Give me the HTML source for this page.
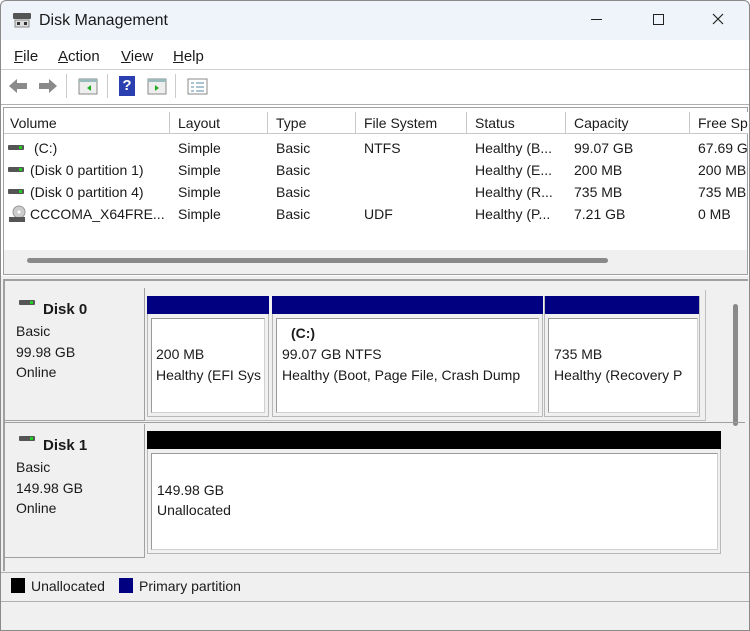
<!DOCTYPE html>
<html><head><meta charset="utf-8"><style>
*{margin:0;padding:0;box-sizing:border-box}
body{width:750px;height:631px;overflow:hidden;background:#fff;font-family:"Liberation Sans",sans-serif;font-size:14px;color:#1a1a1a;position:relative}
.a{position:absolute;white-space:nowrap}
.hdr{position:absolute;top:112px;height:22px;border-right:1px solid #c8c8c8;border-bottom:1px solid #c8c8c8;padding:3px 0 0 6px;background:#fff;white-space:nowrap;overflow:hidden}
.row{position:absolute;left:0;width:748px;height:22px}
.dk{position:absolute;width:16px;height:5px;background:#555;border-radius:1px}
.dk:after{content:"";position:absolute;right:2px;top:1px;width:3px;height:3px;background:#2c2}
.box{position:absolute;background:#fff;border:1px solid #9a9a9a;border-right-color:#d0d0d0;border-bottom-color:#d0d0d0}
.lbl{position:absolute;background:#f0f0f0;border-right:1px solid #a0a0a0;border-bottom:1px solid #a0a0a0}
</style></head><body>
<div class="a" style="left:0;top:0;width:750px;height:40px;background:#eef4f9;border-radius:6px 6px 0 0"></div>
<div class="a" style="left:0;top:0;width:750px;height:631px;border:1px solid #8a8a8a;border-radius:6px 6px 0 0"></div>
<svg class="a" style="left:12px;top:12px" width="20" height="16"><rect x="1" y="1" width="18" height="6" fill="#555" rx="1"/><rect x="3" y="8" width="14" height="7" fill="#ddd" stroke="#888"/><rect x="5" y="10" width="3" height="3" fill="#333"/><rect x="12" y="10" width="3" height="3" fill="#333"/></svg>
<div class="a" style="left:39px;top:12px;font-size:16px">Disk Management</div>
<div class="a" style="left:591px;top:19px;width:11px;height:1px;background:#222"></div>
<div class="a" style="left:653px;top:14px;width:11px;height:11px;border:1px solid #222"></div>
<svg class="a" style="left:712px;top:13px" width="12" height="12"><path d="M1 1L11 11M11 1L1 11" stroke="#222" stroke-width="1.2"/></svg>
<div class="a" style="left:14px;top:48px;font-size:15px"><u>F</u>ile</div>
<div class="a" style="left:58px;top:48px;font-size:15px"><u>A</u>ction</div>
<div class="a" style="left:121px;top:48px;font-size:15px"><u>V</u>iew</div>
<div class="a" style="left:173px;top:48px;font-size:15px"><u>H</u>elp</div>
<div class="a" style="left:1px;top:69px;width:748px;height:1px;background:#d0d0d0"></div>
<svg class="a" style="left:7px;top:77px" width="54" height="18"><path d="M2 9 L10 2 V6 H20 V12 H10 V16 Z" fill="#8a8a8a"/><path d="M50 9 L42 2 V6 H32 V12 H42 V16 Z" fill="#8a8a8a"/></svg>
<div class="a" style="left:66px;top:74px;width:1px;height:24px;background:#ccc"></div>
<svg class="a" style="left:78px;top:78px" width="20" height="17"><rect x="1" y="1" width="18" height="15" fill="#eee" stroke="#888"/><rect x="1" y="1" width="18" height="3" fill="#9bb"/><path d="M13 7 L9 10 L13 13Z" fill="#2a2"/></svg>
<div class="a" style="left:107px;top:74px;width:1px;height:24px;background:#ccc"></div>
<div class="a" style="left:119px;top:76px;width:16px;height:20px;background:#2a3fb0;color:#fff;font-weight:bold;font-size:15px;text-align:center;line-height:20px">?</div>
<svg class="a" style="left:147px;top:78px" width="20" height="17"><rect x="1" y="1" width="18" height="15" fill="#eee" stroke="#888"/><rect x="1" y="1" width="18" height="3" fill="#9bb"/><path d="M8 7 L12 10 L8 13Z" fill="#2a2"/></svg>
<div class="a" style="left:175px;top:74px;width:1px;height:24px;background:#ccc"></div>
<svg class="a" style="left:187px;top:78px" width="21" height="17"><rect x="1" y="1" width="19" height="15" fill="#fff" stroke="#888"/><path d="M4 5h3M4 9h3M4 13h3M9 5h8M9 9h8M9 13h8" stroke="#58a"/></svg>
<div class="a" style="left:1px;top:104px;width:748px;height:1px;background:#b0b0b0"></div>
<div class="a" style="left:3px;top:107px;width:745px;height:168px;border:1px solid #a0a0a0;background:#fff"></div>
<div class="hdr" style="left:4px;width:166px">Volume</div>
<div class="hdr" style="left:170px;width:98px;padding-left:8px">Layout</div>
<div class="hdr" style="left:268px;width:88px;padding-left:8px">Type</div>
<div class="hdr" style="left:356px;width:111px;padding-left:8px">File System</div>
<div class="hdr" style="left:467px;width:99px;padding-left:8px">Status</div>
<div class="hdr" style="left:566px;width:124px;padding-left:8px">Capacity</div>
<div class="hdr" style="left:690px;width:58px;padding-left:8px;border-right:none">Free Sp</div>
<div class="row" style="top:138px;overflow:hidden"><div class="dk" style="left:8px;top:7px"></div><span class="a" style="left:34px;top:2px">(C:)</span><span class="a" style="left:178px;top:2px">Simple</span><span class="a" style="left:276px;top:2px">Basic</span><span class="a" style="left:364px;top:2px">NTFS</span><span class="a" style="left:475px;top:2px">Healthy (B...</span><span class="a" style="left:574px;top:2px">99.07 GB</span><span class="a" style="left:698px;top:2px">67.69 G</span></div>
<div class="row" style="top:160px;overflow:hidden"><div class="dk" style="left:8px;top:7px"></div><span class="a" style="left:30px;top:2px">(Disk 0 partition 1)</span><span class="a" style="left:178px;top:2px">Simple</span><span class="a" style="left:276px;top:2px">Basic</span><span class="a" style="left:475px;top:2px">Healthy (E...</span><span class="a" style="left:574px;top:2px">200 MB</span><span class="a" style="left:698px;top:2px">200 MB</span></div>
<div class="row" style="top:182px;overflow:hidden"><div class="dk" style="left:8px;top:7px"></div><span class="a" style="left:30px;top:2px">(Disk 0 partition 4)</span><span class="a" style="left:178px;top:2px">Simple</span><span class="a" style="left:276px;top:2px">Basic</span><span class="a" style="left:475px;top:2px">Healthy (R...</span><span class="a" style="left:574px;top:2px">735 MB</span><span class="a" style="left:698px;top:2px">735 MB</span></div>
<div class="row" style="top:204px;overflow:hidden"><svg class="a" style="left:8px;top:1px" width="18" height="18"><circle cx="11" cy="7" r="6" fill="#ccc" stroke="#999"/><circle cx="11" cy="7" r="1.5" fill="#fff"/><rect x="1" y="12" width="16" height="5" fill="#555"/></svg><span class="a" style="left:30px;top:2px">CCCOMA_X64FRE...</span><span class="a" style="left:178px;top:2px">Simple</span><span class="a" style="left:276px;top:2px">Basic</span><span class="a" style="left:364px;top:2px">UDF</span><span class="a" style="left:475px;top:2px">Healthy (P...</span><span class="a" style="left:574px;top:2px">7.21 GB</span><span class="a" style="left:698px;top:2px">0 MB</span></div>
<div class="a" style="left:4px;top:250px;width:743px;height:24px;background:#f0f0f0"></div>
<div class="a" style="left:27px;top:258px;width:581px;height:5px;background:#8a8a8a;border-radius:3px"></div>
<div class="a" style="left:1px;top:276px;width:748px;height:296px;background:#f0f0f0"></div>
<div class="a" style="left:3px;top:279px;width:745px;height:2px;background:#a0a0a0"></div>
<div class="a" style="left:3px;top:281px;width:2px;height:290px;background:#a0a0a0"></div>
<div class="a" style="left:733px;top:304px;width:5px;height:122px;background:#8a8a8a;border-radius:3px"></div>
<div class="lbl" style="left:5px;top:288px;width:140px;height:133px"></div>
<div class="dk" style="left:19px;top:300px"></div>
<div class="a" style="left:43px;top:301px;font-weight:bold;font-size:15px">Disk 0</div>
<div class="a" style="left:16px;top:323px">Basic</div>
<div class="a" style="left:16px;top:344px">99.98 GB</div>
<div class="a" style="left:16px;top:364px">Online</div>
<div class="a" style="left:145px;top:290px;width:561px;height:131px;border:1px solid #c0c0c0;border-top:none;border-left:none"></div>
<div class="a" style="left:147px;top:296px;width:122px;height:121px;border:1px solid #b8b8b8;background:#f0f0f0"></div>
<div class="a" style="left:147px;top:296px;width:122px;height:18px;background:#000080"></div>
<div class="box" style="left:151px;top:318px;width:114px;height:95px"></div>
<div class="a" style="left:156px;top:346px">200 MB</div>
<div class="a" style="left:156px;top:367px;width:106px;overflow:hidden">Healthy (EFI Sys</div>
<div class="a" style="left:272px;top:296px;width:271px;height:121px;border:1px solid #b8b8b8;background:#f0f0f0"></div>
<div class="a" style="left:272px;top:296px;width:271px;height:18px;background:#000080"></div>
<div class="box" style="left:276px;top:318px;width:263px;height:95px"></div>
<div class="a" style="left:291px;top:325px;font-weight:bold">(C:)</div>
<div class="a" style="left:282px;top:346px">99.07 GB NTFS</div>
<div class="a" style="left:282px;top:367px;width:252px;overflow:hidden">Healthy (Boot, Page File, Crash Dump</div>
<div class="a" style="left:544px;top:296px;width:156px;height:121px;border:1px solid #b8b8b8;background:#f0f0f0"></div>
<div class="a" style="left:545px;top:296px;width:154px;height:18px;background:#000080"></div>
<div class="box" style="left:548px;top:318px;width:150px;height:95px"></div>
<div class="a" style="left:554px;top:346px">735 MB</div>
<div class="a" style="left:554px;top:367px;width:140px;overflow:hidden">Healthy (Recovery P</div>
<div class="a" style="left:5px;top:422px;width:740px;height:1px;background:#a0a0a0"></div>
<div class="lbl" style="left:5px;top:424px;width:140px;height:134px"></div>
<div class="dk" style="left:19px;top:436px"></div>
<div class="a" style="left:43px;top:437px;font-weight:bold;font-size:15px">Disk 1</div>
<div class="a" style="left:16px;top:459px">Basic</div>
<div class="a" style="left:16px;top:480px">149.98 GB</div>
<div class="a" style="left:16px;top:500px">Online</div>
<div class="a" style="left:147px;top:431px;width:574px;height:123px;border:1px solid #b8b8b8;background:#f0f0f0"></div>
<div class="a" style="left:147px;top:431px;width:574px;height:18px;background:#000"></div>
<div class="box" style="left:151px;top:453px;width:567px;height:97px"></div>
<div class="a" style="left:157px;top:482px">149.98 GB</div>
<div class="a" style="left:157px;top:502px">Unallocated</div>
<div class="a" style="left:1px;top:572px;width:748px;height:30px;background:#f0f0f0;border-top:1px solid #b0b0b0;border-bottom:1px solid #b0b0b0"></div>
<div class="a" style="left:11px;top:578px;width:14px;height:15px;background:#000"></div>
<div class="a" style="left:31px;top:578px">Unallocated</div>
<div class="a" style="left:119px;top:578px;width:14px;height:15px;background:#000080"></div>
<div class="a" style="left:139px;top:578px">Primary partition</div>
<div class="a" style="left:1px;top:602px;width:748px;height:28px;background:#f0f0f0"></div>
</body></html>
